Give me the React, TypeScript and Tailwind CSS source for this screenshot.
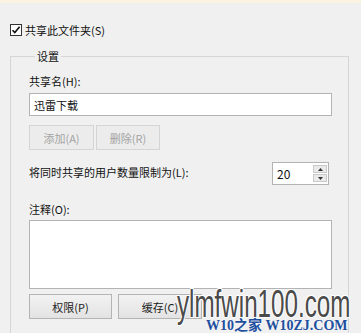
const font = "font-['Microsoft_YaHei','Noto_Sans_CJK_SC',sans-serif]";

const Btn = ({ label, disabled, w }: { label: string; disabled?: boolean; w: string }) => (
  <div
    className={`${w} h-[25px] flex items-center justify-center border text-[11px] ${
      disabled
        ? "border-[#d5d5d5] bg-[#ececec] text-[#a3a3a3]"
        : "border-[#b4b4b4] bg-gradient-to-b from-[#f2f2f2] to-[#e3e3e3] text-[#222]"
    }`}
  >
    {label}
  </div>
);

export default function App() {
  return (
    <div className={`relative w-[361px] h-[333px] overflow-hidden bg-[#f0f0f0] ${font} text-[11px] leading-[14px] text-[#111]`}>
      <div className="h-[3px] bg-[#fbf4e2]" />

      {/* share checkbox */}
      <div className="mt-[20px] ml-[10px] flex items-center gap-[3px]">
        <svg width="12" height="12" viewBox="0 0 12 12">
          <rect x="0.5" y="0.5" width="11" height="11" fill="#fff" stroke="#333" />
          <path d="M2.5 6.2 L4.8 8.6 L9.6 2.8" fill="none" stroke="#111" strokeWidth="1.6" />
        </svg>
        <span>共享此文件夹(S)</span>
      </div>

      {/* settings group */}
      <fieldset className="mt-[11px] ml-[10px] w-[339px] h-[400px] border border-[#d6d6d6] pl-[18px] pr-[15px]">
        <legend className="ml-[6px] px-[2px] leading-[16px]">设置</legend>

        <div className="mt-[10px]">共享名(H):</div>
        <div className="mt-[5px] h-[23px] w-[303px] border border-[#b3b3b3] bg-white flex items-center pl-[4px]">
          迅雷下载
        </div>

        <div className="mt-[9px] flex gap-[2px]">
          <Btn label="添加(A)" disabled w="w-[65px]" />
          <Btn label="删除(R)" disabled w="w-[64px]" />
        </div>

        <div className="mt-[12px] flex items-start justify-between w-[300px]">
          <span className="mt-[3px]">将同时共享的用户数量限制为(L):</span>
          <div className="w-[57px] h-[23px] border border-[#b3b3b3] bg-white flex">
            <span className="flex-1 pl-[4px] flex items-center text-[12px]">20</span>
            <div className="w-[14px] my-[2px] mr-[1px] flex flex-col gap-[1px]">
              <div className="flex-1 flex items-center justify-center border border-[#c9c9c9] bg-[#eaeaea]">
                <svg width="5" height="3" viewBox="0 0 5 3"><path d="M0 3 L2.5 0 L5 3Z" fill="#333" /></svg>
              </div>
              <div className="flex-1 flex items-center justify-center border border-[#c9c9c9] bg-[#eaeaea]">
                <svg width="5" height="3" viewBox="0 0 5 3"><path d="M0 0 L2.5 3 L5 0Z" fill="#333" /></svg>
              </div>
            </div>
          </div>
        </div>

        <div className="mt-[17px]">注释(O):</div>
        <div className="mt-[4px] h-[69px] w-[303px] border border-[#b3b3b3] bg-white" />

        <div className="mt-[5px] flex gap-[6px]">
          <Btn label="权限(P)" w="w-[83px]" />
          <Btn label="缓存(C)" w="w-[84px]" />
        </div>
      </fieldset>

      {/* watermark */}
      <div className="absolute left-[177px] top-[284px] origin-left scale-x-[0.62] font-['Liberation_Sans',sans-serif] text-[39px] leading-[40px] text-[#4a4a4a] [text-shadow:0_0_2px_#fff,1px_1px_0_#fff,-1px_-1px_0_#fff,1px_-1px_0_#fff,-1px_1px_0_#fff]">
        ylmfwin100.com
      </div>
      <div className="absolute left-[206px] top-[318px] font-['Liberation_Serif','Noto_Sans_CJK_SC',serif] font-bold text-[14px] leading-[15px] text-[#1d4f9e] [text-shadow:0_0_2px_#fff]">
        W10之家 W10ZJ.COM
      </div>
    </div>
  );
}
